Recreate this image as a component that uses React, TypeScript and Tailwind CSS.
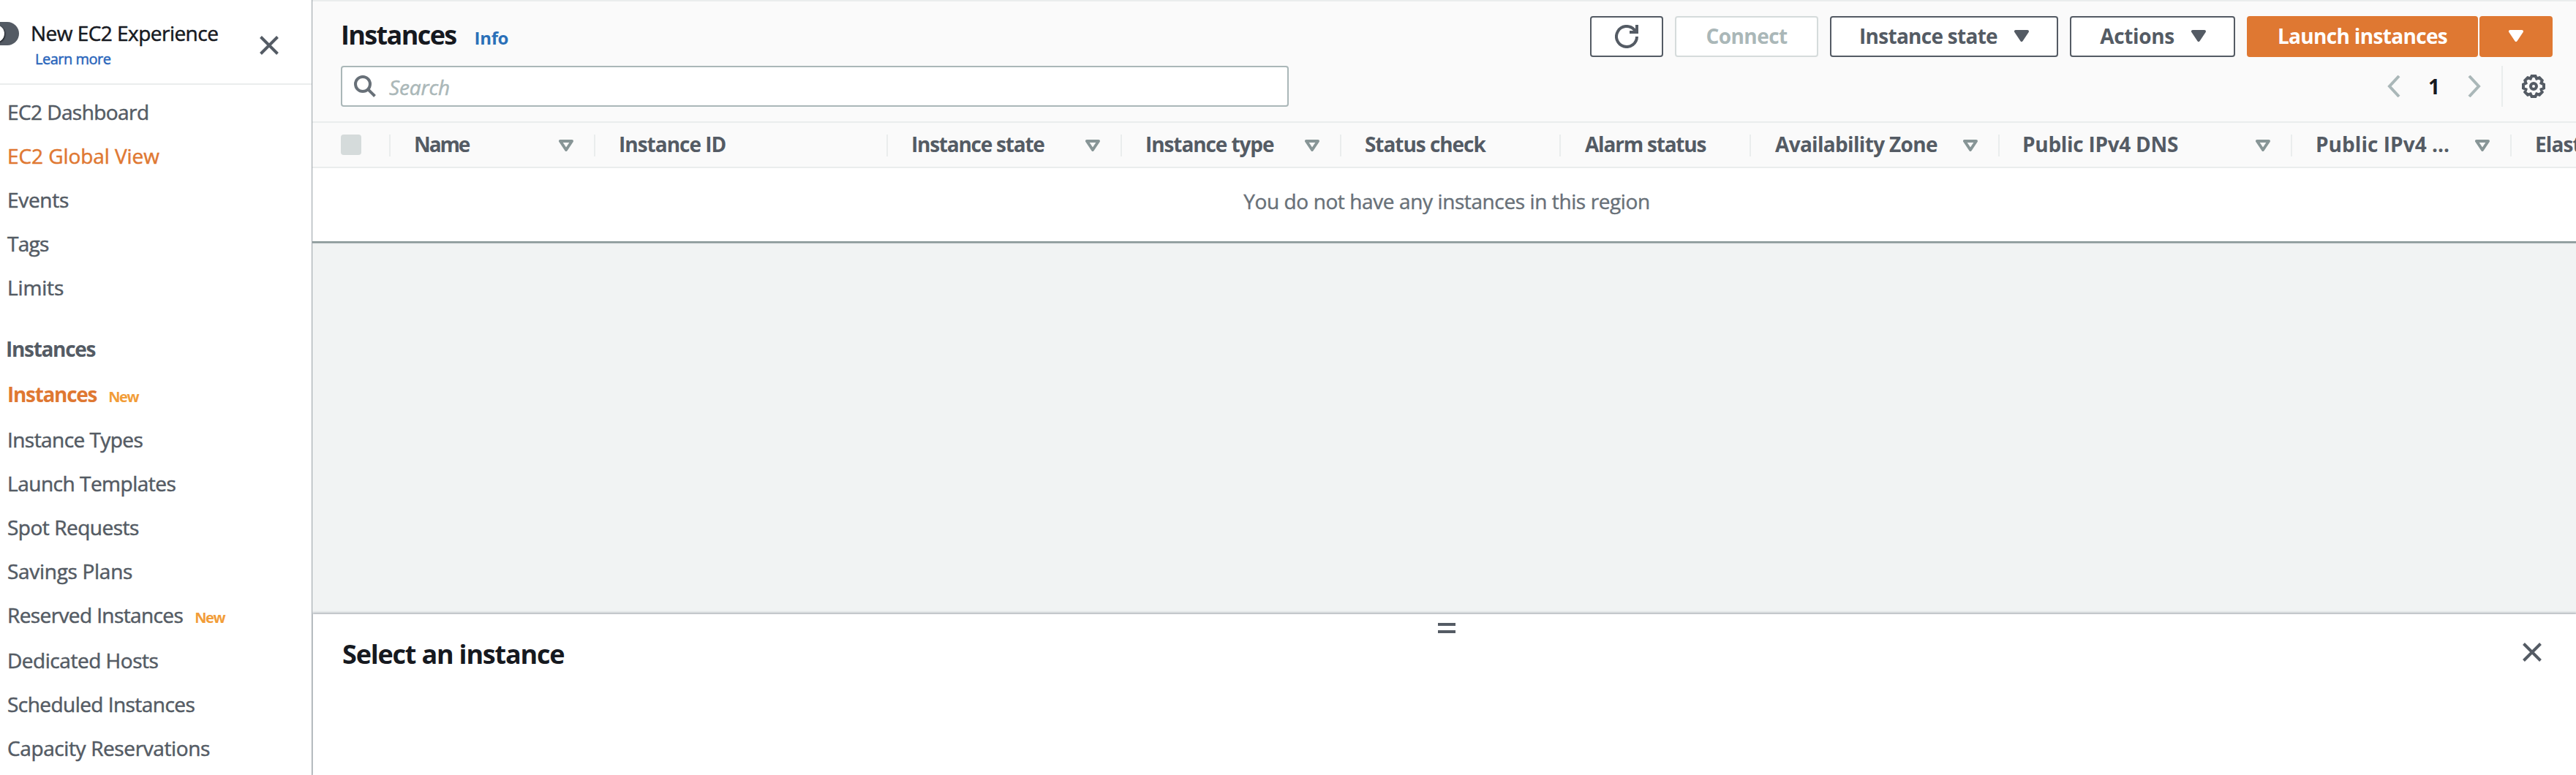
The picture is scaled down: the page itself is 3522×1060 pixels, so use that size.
import React from "react";

const links: { label: string; tracking: string; isNew?: boolean }[] = [
  { label: "Instance Types", tracking: "tracking-[-0.56px]" },
  { label: "Launch Templates", tracking: "tracking-[-0.49px]" },
  { label: "Spot Requests", tracking: "tracking-[-0.49px]" },
  { label: "Savings Plans", tracking: "tracking-[-0.3px]" },
  { label: "Reserved Instances", tracking: "tracking-[-0.61px]", isNew: true },
  { label: "Dedicated Hosts", tracking: "tracking-[-0.47px]" },
  { label: "Scheduled Instances", tracking: "tracking-[-0.55px]" },
  { label: "Capacity Reservations", tracking: "tracking-[-0.39px]" },
];

const topLinks = [
  { label: "EC2 Dashboard", style: "tracking-[-0.58px]" },
  { label: "EC2 Global View", style: "tracking-[-0.08px] text-[#df7832]" },
  { label: "Events", style: "tracking-[-0.3px]" },
  { label: "Tags", style: "tracking-[-0.73px]" },
  { label: "Limits", style: "tracking-[-0.15px]" },
];

const columns = [
  { label: "Name", style: "w-[280px] pl-8", tracking: "tracking-[-2.1px]", sort: true },
  { label: "Instance ID", style: "w-[400px] pl-8", tracking: "tracking-[-1px]" },
  { label: "Instance state", style: "w-[320px] pl-8", tracking: "tracking-[-1.24px]", sort: true },
  { label: "Instance type", style: "w-[300px] pl-8", tracking: "tracking-[-1.09px]", sort: true },
  { label: "Status check", style: "w-[300px] pl-8", tracking: "tracking-[-1.05px]" },
  { label: "Alarm status", style: "w-[260px] pl-[33px]", tracking: "tracking-[-1.21px]" },
  { label: "Availability Zone", style: "w-[340px] pl-[33px]", tracking: "tracking-[-0.68px]", sort: true },
  { label: "Public IPv4 DNS", style: "w-[400px] pl-[31px]", tracking: "tracking-[-0.29px]", sort: true },
  { label: "Public IPv4 ...", style: "w-[300px] pl-8", tracking: "tracking-[0.04px]", sort: true },
  { label: "Elastic IP", style: "w-[300px] pl-8", tracking: "tracking-[-0.9px]" },
];

function Close() {
  return (
    <svg className="block h-[26px] w-[26px]" viewBox="0 0 26 26" fill="none" stroke="#545b64" strokeWidth="4">
      <path d="M1.5 1.5 24.5 24.5M24.5 1.5 1.5 24.5" />
    </svg>
  );
}

function Caret({ className = "" }: { className?: string }) {
  return (
    <svg className={`block h-4 w-5 shrink-0 ${className}`} viewBox="0 0 20 16" fill="currentColor" stroke="currentColor" strokeWidth="4" strokeLinejoin="round">
      <path d="M2 2h16l-8 12z" />
    </svg>
  );
}

function SortCaret() {
  return (
    <svg className="ml-auto mr-7 block h-4 w-5 shrink-0" viewBox="0 0 20 16" fill="none" stroke="#879596" strokeWidth="4" strokeLinejoin="round">
      <path d="M2 2h16l-8 12z" />
    </svg>
  );
}

function NewBadge() {
  return <span className="ml-4 text-[20px] font-bold tracking-[-1.4px] text-[#f29d38] [-webkit-text-stroke:0px]">New</span>;
}

function Sidebar() {
  return (
    <aside className="z-10 flex w-[426px] shrink-0 flex-col bg-white text-[#545b64] shadow-[1px_0_1px_0_#a4abb0]">
      <header className="flex h-[116px] shrink-0 border-b-2 border-[#eaeded]">
        <div className="mt-[30px] flex h-8 w-[26px] items-center overflow-hidden rounded-r-full bg-[#545b64]">
          <span className="-ml-[18px] h-6 w-6 rounded-full bg-white shadow-[1px_1px_2px_#16191f]" />
        </div>
        <div className="ml-4 flex w-[313px] flex-col pt-[25px] whitespace-nowrap [-webkit-text-stroke:0.5px]">
          <span className="text-[28px] leading-10 font-medium tracking-[-0.53px] text-[#16191f]">New EC2 Experience</span>
          <span className="ml-[6px] text-[20px] leading-8 font-medium tracking-[-0.5px] text-[#2a66bb]">Learn more</span>
        </div>
        <div className="mt-[49px]">
          <Close />
        </div>
      </header>
      <nav className="mt-[7px] flex flex-col pl-[10px] text-[28px] leading-[60px] font-medium whitespace-nowrap [-webkit-text-stroke:0.5px]">
        {topLinks.map((l) => (
          <a key={l.label} className={l.style}>{l.label}</a>
        ))}
        <h2 className="mt-6 mb-0.5 -ml-[2px] font-bold tracking-[-1.31px] [-webkit-text-stroke:0px]">Instances</h2>
        <a className="flex h-[62px] items-baseline font-bold tracking-[-1.31px] text-[#df7832] [-webkit-text-stroke:0px]">
          Instances
          <NewBadge />
        </a>
        {links.map((l) => (
          <a key={l.label} className={`flex items-baseline ${l.isNew ? "h-[62px]" : "h-[60px]"} ${l.tracking}`}>
            {l.label}
            {l.isNew && <NewBadge />}
          </a>
        ))}
      </nav>
    </aside>
  );
}

const button = "flex h-14 shrink-0 items-center justify-center rounded border-2 pb-0.5 text-[28px] font-bold whitespace-nowrap";

function Toolbar() {
  return (
    <div className="flex h-[168px] flex-col border-y-2 border-[#eaeded] bg-[#fafafa] pt-5 pr-8 pl-10">
      <div className="flex h-14">
        <div className="flex items-baseline leading-[52px]">
          <h1 className="text-[36px] font-bold tracking-[-1.62px] text-[#16191f]">Instances</h1>
          <a className="ml-[25px] text-[24px] font-bold tracking-[-0.34px] text-[#2a70b8]">Info</a>
        </div>
        <div className="ml-auto flex gap-4 text-[#545b64]">
          <button className={`${button} w-[100px] border-[#545b64] bg-white`}>
            <svg className="mt-0.5 h-8 w-8" viewBox="0 0 32 32" fill="none" stroke="currentColor" strokeWidth="4">
              <path d="M30 16a14 14 0 1 1-4-9.8L28 9" />
              <path d="M30 0v10H20" />
            </svg>
          </button>
          <button className={`${button} w-[196px] border-[#d5dbdb] bg-white tracking-[-0.55px] text-[#aab7b8]`}>Connect</button>
          <button className={`${button} w-[312px] border-[#545b64] bg-white tracking-[-0.72px]`}>
            Instance state
            <Caret className="ml-[23px]" />
          </button>
          <button className={`${button} w-[226px] border-[#545b64] bg-white pl-px tracking-[-0.39px]`}>
            Actions
            <Caret className="ml-[23px]" />
          </button>
          <div className="flex gap-0.5 text-white">
            <button className={`${button} w-[316px] border-[#df7832] bg-[#df7832] tracking-[-0.66px]`}>Launch instances</button>
            <button className={`${button} w-[100px] border-[#df7832] bg-[#df7832]`}>
              <Caret />
            </button>
          </div>
        </div>
      </div>
      <div className="mt-3 flex h-14">
        <div className="flex w-[1296px] items-center rounded border-2 border-[#aab7b8] bg-white">
          <svg className="ml-4 h-[30px] w-[30px]" viewBox="0 0 30 30" fill="none" stroke="#687078" strokeWidth="4">
            <circle cx="12" cy="12" r="10" />
            <path d="M19 19l9.5 9.5" />
          </svg>
          <span className="ml-[18px] pt-[2px] text-[28px] tracking-[-0.13px] text-[#aab7b8] italic [-webkit-text-stroke:0.5px]">Search</span>
        </div>
        <div className="ml-auto flex items-center">
          <svg className="h-[30px] w-[18px]" viewBox="0 0 18 30" fill="none" stroke="#aab7b8" strokeWidth="4">
            <path d="M16 1 3 15l13 14" />
          </svg>
          <span className="w-[92px] text-center text-[28px] font-bold text-[#16191f]">1</span>
          <svg className="h-[30px] w-[18px]" viewBox="0 0 18 30" fill="none" stroke="#aab7b8" strokeWidth="4">
            <path d="M2 1l13 14L2 29" />
          </svg>
          <span className="ml-7 h-14 w-0.5 bg-[#eaeded]" />
          <svg className="mr-[10px] ml-[26px] h-8 w-8" viewBox="0 0 32 32" fill="none" stroke="#545b64" strokeWidth="4">
            <path d="M13.500 2h5l1.700 3.500 3.800-1.200 3.700 3.700-1.200 3.800 3.500 1.700v5l-3.500 1.700 1.200 3.800-3.700 3.700-3.800-1.200-1.700 3.500h-5l-1.700-3.500-3.800 1.200-3.700-3.700 1.200-3.800L2 18.500v-5l3.500-1.700L4.300 8 8 4.300l3.800 1.200z" />
            <circle cx="16" cy="16" r="4" />
          </svg>
        </div>
      </div>
    </div>
  );
}

function InstancesTable() {
  return (
    <section className="border-b-2 border-[#879596] shadow-[0_1px_1px_#b8c0c1]">
      <div className="flex h-[62px] overflow-hidden border-b-2 border-[#eaeded] bg-[#fafafa] pt-4 pl-10">
        <span className="mr-[38px] h-7 w-7 shrink-0 rounded bg-[#d5dbdb]" />
        {columns.map((c) => (
          <div key={c.label} className={`flex h-[30px] shrink-0 items-center border-l-2 border-[#eaeded] whitespace-nowrap ${c.style}`}>
            <span className={`pb-[3px] text-[28px] leading-[27px] font-bold text-[#545b64] ${c.tracking}`}>{c.label}</span>
            {c.sort && <SortCaret />}
          </div>
        ))}
      </div>
      <p className="flex h-[100px] items-center justify-center bg-white pb-[10px] pl-2 text-[28px] tracking-[-0.4px] text-[#687078] [-webkit-text-stroke:0.4px]">
        You do not have any instances in this region
      </p>
    </section>
  );
}

function DetailPanel() {
  return (
    <section className="mt-auto ml-0.5 h-[220px] bg-white shadow-[0_-1px_3px_1px_#b4b9be]">
      <div className="mx-auto box-content w-6 pt-3 pl-[6px]">
        <div className="h-[14px] border-y-4 border-[#545b64]" />
      </div>
      <div className="flex justify-between pr-[47px] pl-10">
        <h2 className="mt-1 text-[36px] leading-[50px] font-bold tracking-[-1.2px] text-[#16191f]">Select an instance</h2>
        <div className="mt-[13px]">
          <Close />
        </div>
      </div>
    </section>
  );
}

export default function App() {
  return (
    <div className="flex h-[1060px] w-[3522px] overflow-hidden bg-[#f1f3f3] font-['Open_Sans',sans-serif]">
      <Sidebar />
      <main className="flex min-w-0 flex-1 flex-col">
        <Toolbar />
        <InstancesTable />
        <DetailPanel />
      </main>
    </div>
  );
}
